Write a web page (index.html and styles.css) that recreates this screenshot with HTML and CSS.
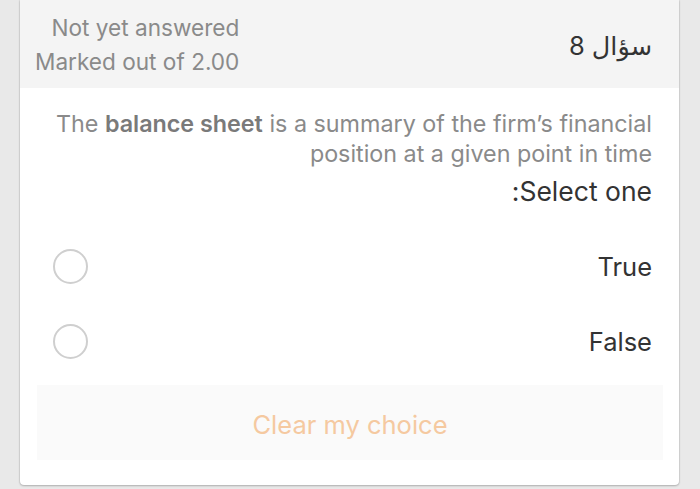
FILE: index.html
```html
<!DOCTYPE html>
<html lang="ar" dir="rtl">
<head>
<meta charset="utf-8">
<title>Question 8</title>
<link rel="stylesheet" href="styles.css">
</head>
<body>
<div class="card">
  <div class="header">
    <div class="qno">سؤال 8</div>
    <div class="info">
      <div>Not yet answered</div>
      <div>Marked out of 2.00</div>
    </div>
  </div>
  <div class="content">
    <p class="qtext" dir="rtl">The <b>balance sheet</b> is a summary of the firm’s financial position at a given point in time</p>
    <div class="prompt">Select one:</div>
    <div class="answers">
      <label class="option"><span class="label">True</span><span class="radio"></span></label>
      <label class="option"><span class="label">False</span><span class="radio"></span></label>
    </div>
    <div class="clear">Clear my choice</div>
  </div>
</div>
</body>
</html>
```

FILE: styles.css
```css
html, body {
  margin: 0;
  padding: 0;
  background: #e9e9e9;
  height: 489px;
  overflow: hidden;
}
body {
  font-family: Inter, "Noto Sans", "DejaVu Sans", sans-serif;
}
.card {
  margin: 0 21px 0 20px;
  width: 659px;
  background: #fff;
  border-radius: 0 0 4px 4px;
  box-shadow: 0 1px 2px rgba(0,0,0,0.25), 1px 0 1px rgba(0,0,0,0.06), -1px 0 1px rgba(0,0,0,0.06);
}
.header {
  height: 88px;
  background: #f4f4f4;
  display: flex;
  justify-content: space-between;
  align-items: center;
  padding: 0 27px 0 15px;
  box-sizing: border-box;
}
.qno {
  font-size: 25.5px;
  color: #333;
  padding-top: 2px;
}
.info {
  font-size: 22.6px;
  line-height: 34px;
  color: #8a8a8a;
  text-align: right;
  direction: ltr;
  padding-top: 2px;
}
.content {
  padding: 21px 27px 25px 17px;
}
.qtext {
  margin: 0;
  font-size: 23.3px;
  line-height: 30px;
  color: #8a8a8a;
  text-align: right;
  padding-left: 12px;
}
.qtext b {
  font-weight: 600;
  color: #7a7a7a;
}
.prompt {
  margin-top: 7px;
  font-size: 26.5px;
  line-height: 30px;
  color: #333;
}
.answers {
  margin-top: 23px;
  display: flex;
  flex-direction: column;
}
.option {
  height: 75px;
  display: flex;
  justify-content: space-between;
  align-items: center;
  font-size: 25.5px;
  color: #333;
}
.radio {
  width: 31px;
  height: 31px;
  border: 2px solid #cfcfcf;
  border-radius: 50%;
  margin-left: 16px;
}
.clear {
  margin: 6px -11px 0 0;
  height: 75px;
  background: #fafafa;
  display: flex;
  align-items: center;
  justify-content: center;
  font-size: 25.5px;
  color: #f5c9a0;
  padding-top: 3px;
  box-sizing: border-box;
}
```
